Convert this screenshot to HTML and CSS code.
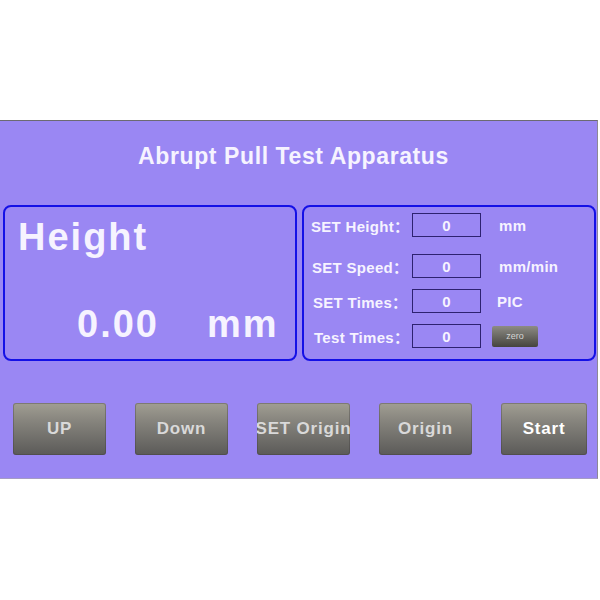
FILE: index.html
```html
<!DOCTYPE html>
<html lang="en">
<head>
<meta charset="utf-8">
<title>Abrupt Pull Test Apparatus</title>
<link rel="stylesheet" href="styles.css">
</head>
<body>
<div class="screen">
  <h1 class="title">Abrupt Pull Test Apparatus</h1>

  <div class="panels">
    <section class="box readout">
      <div class="readout-label">Height</div>
      <div class="readout-value">
        <span class="readout-num">0.00</span>
        <span class="readout-unit">mm</span>
      </div>
    </section>

    <section class="box settings">
      <div class="row row-height">
        <span class="label">SET Height：</span>
        <span class="field">0</span>
        <span class="unit">mm</span>
      </div>
      <div class="row row-speed">
        <span class="label">SET Speed：</span>
        <span class="field">0</span>
        <span class="unit">mm/min</span>
      </div>
      <div class="row row-times">
        <span class="label">SET Times：</span>
        <span class="field">0</span>
        <span class="unit unit-pic">PIC</span>
      </div>
      <div class="row row-test">
        <span class="label">Test Times：</span>
        <span class="field">0</span>
        <button class="zero" type="button">zero</button>
      </div>
    </section>
  </div>

  <div class="actions">
    <button class="key" type="button">UP</button>
    <button class="key" type="button">Down</button>
    <button class="key" type="button">SET Origin</button>
    <button class="key" type="button">Origin</button>
    <button class="key key-start" type="button">Start</button>
  </div>
</div>
</body>
</html>
```

FILE: styles.css
```css
html, body {
  margin: 0;
  padding: 0;
  background: #ffffff;
}

body {
  font-family: "Liberation Sans", Arial, "Noto Sans CJK SC", sans-serif;
  font-weight: bold;
  color: #f6f3ff;
}

/* HMI screen */
.screen {
  margin-top: 120px;
  width: 597px;
  height: 357px;
  background: #9a87f3;
  border-top: 1px solid #6c6a72;
  border-right: 1px solid #8c8896;
  border-bottom: 1px solid #a59cc4;
  display: flex;
  flex-direction: column;
}

.title {
  margin: 0;
  height: 84px;
  box-sizing: border-box;
  padding-top: 24px;
  padding-right: 10px;
  text-align: center;
  font-size: 23px;
  line-height: 23px;
  letter-spacing: 0.6px;
  font-weight: bold;
}

/* two framed panels */
.panels {
  display: flex;
  gap: 5px;
  padding-left: 3px;
  height: 156px;
}

.box {
  width: 294px;
  height: 156px;
  box-sizing: border-box;
  border: 2px solid #1410e6;
  border-radius: 8px;
}

/* large height readout */
.readout {
  display: flex;
  flex-direction: column;
  padding: 11px 0 0 13px;
}

.readout-label {
  font-size: 38px;
  line-height: 38px;
  letter-spacing: 2px;
}

.readout-value {
  margin-top: auto;
  margin-bottom: 16px;
  padding-left: 59px;
  display: flex;
  font-size: 38px;
  line-height: 38px;
  letter-spacing: 2px;
}

.readout-unit {
  margin-left: 48px;
}

/* parameter settings */
.settings {
  padding: 6px 0 0 6px;
}

.row {
  display: flex;
  align-items: center;
  height: 24px;
  font-size: 15px;
  letter-spacing: 0.3px;
}

.row-speed {
  margin-top: 17px;
}

.row-times,
.row-test {
  margin-top: 11px;
}

.label {
  width: 102px;
  box-sizing: border-box;
  white-space: nowrap;
}

.row-height .label { padding-left: 1px; }
.row-speed .label { padding-left: 2px; }
.row-times .label { padding-left: 3px; }
.row-test .label { padding-left: 4px; }

.field {
  width: 69px;
  height: 24px;
  box-sizing: border-box;
  border: 1px solid #2e2270;
  display: flex;
  align-items: center;
  justify-content: center;
}

.unit {
  margin-left: 18px;
}

.unit-pic {
  margin-left: 16px;
}

.zero {
  margin-left: 11px;
  width: 46px;
  height: 21px;
  padding: 0;
  border: none;
  border-radius: 2px;
  background: linear-gradient(#8d8b84, #45443f);
  color: #d4d4d4;
  font-family: "Liberation Sans", Arial, sans-serif;
  font-size: 9px;
  font-weight: normal;
}

/* command buttons */
.actions {
  margin-top: 42px;
  padding-left: 13px;
  display: flex;
  gap: 29px;
}

.key {
  width: 93px;
  height: 52px;
  padding: 0;
  border: none;
  border-radius: 3px;
  background: linear-gradient(#a19e93 0%, #86847d 35%, #5b5a58 100%);
  box-shadow: inset 0 0 0 1px rgba(60, 58, 56, 0.35);
  color: #d9d9d9;
  font-family: "Liberation Sans", Arial, sans-serif;
  font-weight: bold;
  font-size: 17px;
  letter-spacing: 0.8px;
  white-space: nowrap;
  overflow: hidden;
  display: flex;
  align-items: center;
  justify-content: center;
}

.key-start {
  width: 86px;
  color: #ffffff;
}
```
